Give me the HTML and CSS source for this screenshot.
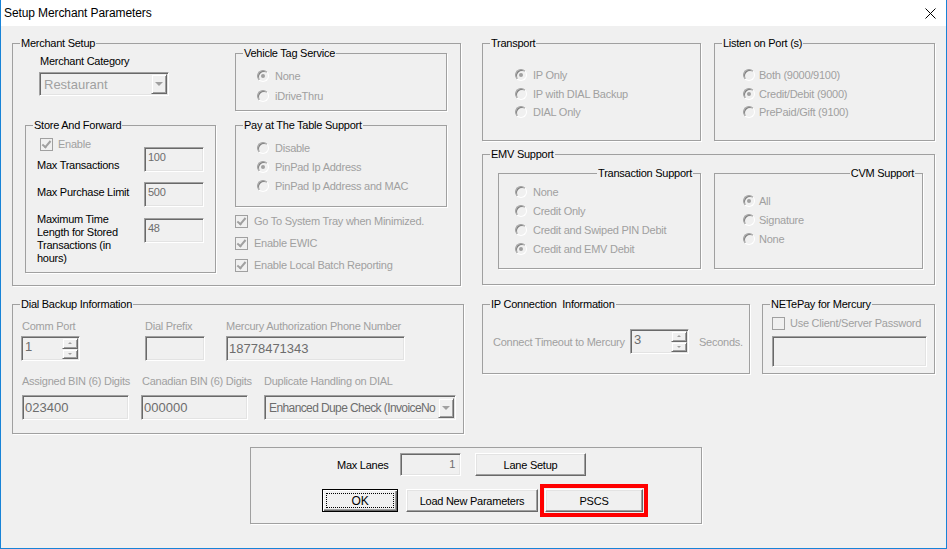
FILE: index.html
```html
<!DOCTYPE html>
<html lang="en">
<head>
    <meta charset="UTF-8">
    <title>Setup Merchant Parameters</title>
    <link rel="stylesheet" href="styles.css">
</head>
<body>

<div class="window">
    <div class="titlebar">
        <span class="title">Setup Merchant Parameters</span>
        <svg class="close" width="11" height="11" viewBox="0 0 11 11">
            <path d="M0.5 0.5 L10.5 10.5 M10.5 0.5 L0.5 10.5" stroke="#000" stroke-width="1" fill="none"/>
        </svg>
    </div>

    <div class="client">
        <div class="columns">
            <div class="col-left">
                <fieldset class="group merchant">
                    <legend>Merchant Setup</legend>
                    <div class="merchant-body">
                        <div class="merchant-main">
                            <div class="cat-label">Merchant Category</div>
                            <div class="combo cat-combo">
                                <span class="combo-text light">Restaurant</span>
                                <span class="drop"><i class="tri-down"></i></span>
                            </div>

                            <fieldset class="group store">
                                <legend>Store And Forward</legend>
                                <div class="check enable"><span class="box on"></span>Enable</div>
                                <div class="frow r1">
                                    <span class="flabel">Max Transactions</span>
                                    <span class="edit small">100</span>
                                </div>
                                <div class="frow r2">
                                    <span class="flabel">Max Purchase Limit</span>
                                    <span class="edit small">500</span>
                                </div>
                                <div class="frow r3">
                                    <span class="flabel">Maximum Time Length for Stored Transactions (in hours)</span>
                                    <span class="edit small">48</span>
                                </div>
                            </fieldset>
                        </div>

                        <div class="merchant-side">
                            <fieldset class="group vehicle">
                                <legend>Vehicle Tag Service</legend>
                                <div class="opts">
                                    <div class="radio-row"><span class="radio on"></span>None</div>
                                    <div class="radio-row"><span class="radio"></span>iDriveThru</div>
                                </div>
                            </fieldset>

                            <fieldset class="group table">
                                <legend>Pay at The Table Support</legend>
                                <div class="opts">
                                    <div class="radio-row"><span class="radio"></span>Disable</div>
                                    <div class="radio-row"><span class="radio on"></span>PinPad Ip Address</div>
                                    <div class="radio-row"><span class="radio"></span>PinPad Ip Address and MAC</div>
                                </div>
                            </fieldset>

                            <div class="checks">
                                <div class="check"><span class="box on"></span>Go To System Tray when Minimized.</div>
                                <div class="check"><span class="box on"></span>Enable EWIC</div>
                                <div class="check"><span class="box on"></span>Enable Local Batch Reporting</div>
                            </div>
                        </div>
                    </div>
                </fieldset>

                <fieldset class="group dial">
                    <legend>Dial Backup Information</legend>
                    <div class="dial-row d1">
                        <div class="dcol c-comm">
                            <span class="dlabel">Comm Port</span>
                            <div class="spin">
                                <span class="spin-text">1</span>
                                <span class="spin-btns">
                                    <span class="sbtn"><i class="tri-up"></i></span>
                                    <span class="sbtn"><i class="tri-down small"></i></span>
                                </span>
                            </div>
                        </div>
                        <div class="dcol c-prefix">
                            <span class="dlabel">Dial Prefix</span>
                            <span class="edit big"></span>
                        </div>
                        <div class="dcol c-phone">
                            <span class="dlabel">Mercury Authorization Phone Number</span>
                            <span class="edit big">18778471343</span>
                        </div>
                    </div>
                    <div class="dial-row d2">
                        <div class="dcol c-bin">
                            <span class="dlabel">Assigned BIN (6) Digits</span>
                            <span class="edit big">023400</span>
                        </div>
                        <div class="dcol c-cbin">
                            <span class="dlabel">Canadian BIN (6) Digits</span>
                            <span class="edit big">000000</span>
                        </div>
                        <div class="dcol c-dupe">
                            <span class="dlabel">Duplicate Handling on DIAL</span>
                            <div class="combo dupe-combo">
                                <span class="combo-text">Enhanced Dupe Check (InvoiceNo</span>
                                <span class="drop"><i class="tri-down"></i></span>
                            </div>
                        </div>
                    </div>
                </fieldset>
            </div>

            <div class="col-right">
                <div class="top-row">
                    <fieldset class="group transport">
                        <legend>Transport</legend>
                        <div class="opts">
                            <div class="radio-row"><span class="radio on"></span>IP Only</div>
                            <div class="radio-row"><span class="radio"></span>IP with DIAL Backup</div>
                            <div class="radio-row"><span class="radio"></span>DIAL Only</div>
                        </div>
                    </fieldset>
                    <fieldset class="group listen">
                        <legend>Listen on Port (s)</legend>
                        <div class="opts">
                            <div class="radio-row"><span class="radio"></span>Both (9000/9100)</div>
                            <div class="radio-row"><span class="radio on"></span>Credit/Debit (9000)</div>
                            <div class="radio-row"><span class="radio"></span>PrePaid/Gift (9100)</div>
                        </div>
                    </fieldset>
                </div>

                <fieldset class="group emv">
                    <legend>EMV Support</legend>
                    <div class="emv-row">
                        <fieldset class="group trans">
                            <legend class="right">Transaction Support</legend>
                            <div class="opts">
                                <div class="radio-row"><span class="radio"></span>None</div>
                                <div class="radio-row"><span class="radio"></span>Credit Only</div>
                                <div class="radio-row"><span class="radio"></span>Credit and Swiped PIN Debit</div>
                                <div class="radio-row"><span class="radio on"></span>Credit and EMV Debit</div>
                            </div>
                        </fieldset>
                        <fieldset class="group cvm">
                            <legend class="right">CVM Support</legend>
                            <div class="opts">
                                <div class="radio-row"><span class="radio on"></span>All</div>
                                <div class="radio-row"><span class="radio"></span>Signature</div>
                                <div class="radio-row"><span class="radio"></span>None</div>
                            </div>
                        </fieldset>
                    </div>
                </fieldset>

                <div class="bottom-row">
                    <fieldset class="group ipconn">
                        <legend>IP Connection&nbsp; Information</legend>
                        <div class="timeout">
                            <span class="t-label">Connect Timeout to Mercury</span>
                            <div class="spin t-spin">
                                <span class="spin-text">3</span>
                                <span class="spin-btns">
                                    <span class="sbtn"><i class="tri-up"></i></span>
                                    <span class="sbtn"><i class="tri-down small"></i></span>
                                </span>
                            </div>
                            <span class="t-sec">Seconds.</span>
                        </div>
                    </fieldset>
                    <fieldset class="group netepay">
                        <legend>NETePay for Mercury</legend>
                        <div class="check pw"><span class="box"></span>Use Client/Server Password</div>
                        <span class="edit pw-field"></span>
                    </fieldset>
                </div>
            </div>
        </div>

        <div class="lanes">
            <div class="lanes-row1">
                <span class="lanes-label">Max Lanes</span>
                <span class="edit lanes-field">1</span>
                <button class="btn lane-btn">Lane Setup</button>
            </div>
            <div class="lanes-row2">
                <button class="btn default ok-btn"><span class="focus">OK</span></button>
                <button class="btn load-btn">Load New Parameters</button>
                <button class="btn pscs-btn">PSCS</button>
            </div>
        </div>
    </div>
</div>

</body>
</html>
```

FILE: styles.css
```css
* {
    box-sizing: border-box;
}
body {
    margin: 0;
    font-family: "Liberation Sans", Arial, sans-serif;
    font-size: 11px;
    letter-spacing: -0.25px;
    color: #000;
    background: #f0f0f0;
}
.window {
    width: 947px;
    height: 549px;
    border: 1px solid #1883d7;
    border-top: none;
    background: #f0f0f0;
    display: flex;
    flex-direction: column;
}
.titlebar {
    height: 26px;
    flex: none;
    background: #fff;
    display: flex;
    align-items: center;
    justify-content: space-between;
    padding: 0 10px 0 3px;
}
.title {
    font-size: 12px;
    letter-spacing: -0.1px;
}
.client {
    flex: 1;
    padding: 10px 0 0 11px;
}
.columns {
    display: flex;
    gap: 18px;
}
.col-left {
    width: 452px;
}
.col-right {
    width: 453px;
}

/* group boxes */
.group {
    margin: 0;
    padding: 0;
    min-width: 0;
    border: 1px solid #a0a0a0;
    box-shadow: 1px 1px 0 #fff;
}
.group > legend {
    padding: 0 1px;
    margin-left: 7px;
    line-height: 14px;
    height: 14px;
}
.group > legend.right {
    margin-left: auto;
    margin-right: 7px;
}

/* controls */
.edit {
    display: block;
    border: 1px solid;
    border-color: #a0a0a0 #fff #fff #a0a0a0;
    box-shadow: inset 1px 1px 0 #696969, inset -1px -1px 0 #e3e3e3;
    background: #f0f0f0;
    color: #6d6d6d;
    padding: 2px 3px;
    line-height: 14px;
    white-space: nowrap;
    overflow: hidden;
}
.edit.small {
    width: 60px;
    height: 25px;
    flex: none;
}
.edit.big {
    height: 25px;
    font-size: 13px;
    letter-spacing: 0;
    padding: 4px 2px;
    line-height: 16px;
}
.combo {
    display: flex;
    align-items: center;
    border: 1px solid;
    border-color: #a0a0a0 #fff #fff #a0a0a0;
    box-shadow: inset 1px 1px 0 #696969, inset -1px -1px 0 #e3e3e3;
    background: #f0f0f0;
    padding: 1px 1px 1px 2px;
    color: #6d6d6d;
    font-size: 13px;
    letter-spacing: 0;
}
.combo-text {
    flex: 1;
    white-space: nowrap;
    overflow: hidden;
    padding-left: 2px;
}
.combo-text.light {
    color: #a0a0a0;
}
.drop {
    width: 16px;
    height: 20px;
    flex: none;
    display: flex;
    align-items: center;
    justify-content: center;
    border: 1px solid;
    border-color: #f0f0f0 #696969 #696969 #f0f0f0;
    box-shadow: inset 1px 1px 0 #fff, inset -1px -1px 0 #a0a0a0;
}
.tri-down {
    width: 0;
    height: 0;
    border-left: 4px solid transparent;
    border-right: 4px solid transparent;
    border-top: 4px solid #a0a0a0;
}
.tri-down.small,
.tri-up {
    border-left-width: 2px;
    border-right-width: 2px;
    border-top-width: 2px;
}
.tri-up {
    width: 0;
    height: 0;
    border-left: 2px solid transparent;
    border-right: 2px solid transparent;
    border-bottom: 2px solid #a0a0a0;
}
.spin {
    display: flex;
    height: 25px;
    border: 1px solid;
    border-color: #a0a0a0 #fff #fff #a0a0a0;
    box-shadow: inset 1px 1px 0 #696969, inset -1px -1px 0 #e3e3e3;
    padding: 1px 1px 1px 2px;
    color: #6d6d6d;
    font-size: 13px;
    letter-spacing: 0;
}
.spin-text {
    flex: 1;
    line-height: 18px;
    padding-left: 1px;
}
.spin-btns {
    width: 16px;
    display: flex;
    flex-direction: column;
}
.sbtn {
    flex: 1;
    display: flex;
    align-items: center;
    justify-content: center;
    border: 1px solid;
    border-color: #f0f0f0 #696969 #696969 #f0f0f0;
    box-shadow: inset 1px 1px 0 #fff, inset -1px -1px 0 #a0a0a0;
}
.radio-row {
    display: flex;
    align-items: center;
    gap: 6px;
    height: 14px;
    color: #a0a0a0;
    white-space: nowrap;
}
.radio {
    width: 12px;
    height: 12px;
    flex: none;
    border-radius: 50%;
    border: 1px solid;
    border-color: #a0a0a0 #fff #fff #a0a0a0;
    box-shadow: inset 1px 1px 0 #808080;
    background: #f0f0f0;
    display: flex;
    align-items: center;
    justify-content: center;
}
.radio.on::after {
    content: "";
    width: 4px;
    height: 4px;
    border-radius: 50%;
    background: #a0a0a0;
}
.check {
    display: flex;
    align-items: center;
    gap: 6px;
    height: 14px;
    color: #a0a0a0;
    white-space: nowrap;
}
.box {
    width: 13px;
    height: 13px;
    flex: none;
    border: 1px solid #a0a0a0;
    background: #f0f0f0;
    display: flex;
    align-items: center;
    justify-content: center;
}
.box.on::after {
    content: "";
    width: 3px;
    height: 7px;
    margin-top: -2px;
    border: solid #a0a0a0;
    border-width: 0 2px 2px 0;
    transform: rotate(40deg);
}

/* merchant setup */
.merchant {
    width: 449px;
    height: 250px;
}
.merchant-body {
    display: flex;
    margin-top: -4px;
    padding-left: 12px;
}
.merchant-main {
    width: 191px;
}
.cat-label {
    margin: 8px 0 0 15px;
    line-height: 14px;
}
.cat-combo {
    margin: 4px 0 0 14px;
    width: 130px;
    height: 24px;
}
.store {
    margin-top: 22px;
    width: 191px;
    height: 155px;
}
.enable {
    margin: 5px 0 0 14px;
    gap: 5px;
}
.frow {
    display: flex;
    margin-left: 11px;
}
.flabel {
    width: 107px;
    line-height: 14px;
}
.r1 {
    margin-top: -4px;
}
.r1 .flabel {
    margin-top: 11px;
}
.r2 {
    margin-top: 10px;
}
.r2 .flabel {
    margin-top: 3px;
}
.r3 {
    margin-top: 11px;
}
.r3 .flabel {
    margin-top: -5px;
    line-height: 13px;
    padding-right: 10px;
}
.merchant-side {
    margin-left: 19px;
    width: 212px;
}
.opts {
    display: flex;
    flex-direction: column;
}
.vehicle {
    height: 65px;
}
.vehicle .opts {
    padding: 9px 0 0 21px;
    gap: 6px;
}
.table {
    margin-top: 7px;
    height: 89px;
}
.table .opts {
    padding: 9px 0 0 21px;
    gap: 5px;
}
.checks {
    margin-top: 7px;
    display: flex;
    flex-direction: column;
    gap: 8px;
}

/* dial backup */
.dial {
    margin-top: 11px;
    width: 452px;
    height: 137px;
}
.dial-row {
    display: flex;
}
.dcol {
    display: flex;
    flex-direction: column;
    flex: none;
}
.dlabel {
    color: #a0a0a0;
    line-height: 14px;
    white-space: nowrap;
}
.d1 {
    margin-top: 8px;
    padding-left: 8px;
}
.d1 .dlabel {
    margin-bottom: 3px;
}
.c-comm {
    width: 59px;
}
.c-comm .dlabel {
    margin-left: 1px;
}
.c-prefix {
    width: 60px;
    margin-left: 65px;
}
.c-phone {
    width: 179px;
    margin-left: 21px;
}
.d2 {
    margin-top: 13px;
    padding-left: 9px;
}
.d2 .dlabel {
    margin-bottom: 7px;
}
.c-bin {
    width: 107px;
}
.c-cbin {
    width: 107px;
    margin-left: 12px;
}
.c-cbin .dlabel {
    margin-left: 1px;
}
.c-dupe {
    width: 192px;
    margin-left: 16px;
}
.dupe-combo {
    height: 25px;
    font-size: 12px;
    letter-spacing: -0.6px;
}

/* right column */
.top-row {
    display: flex;
    gap: 13px;
}
.transport {
    width: 219px;
    height: 105px;
}
.listen {
    width: 221px;
    height: 105px;
}
.transport .opts {
    padding: 18px 0 0 32px;
    gap: 4.5px;
}
.listen .opts {
    padding: 18px 0 0 28px;
    gap: 4.5px;
}
.listen .radio-row,
.cvm .radio-row {
    gap: 4px;
}
.emv {
    margin-top: 6px;
    width: 453px;
    height: 138px;
}
.emv-row {
    display: flex;
    gap: 13px;
    margin: 5px 0 0 15px;
}
.trans {
    width: 203px;
    height: 103px;
}
.cvm {
    width: 209px;
    height: 103px;
}
.trans .opts {
    padding: 5px 0 0 16px;
    gap: 5px;
}
.cvm .opts {
    padding: 14px 0 0 28px;
    gap: 5px;
}
.bottom-row {
    display: flex;
    gap: 12px;
    margin-top: 12px;
}
.ipconn {
    width: 268px;
    height: 77px;
}
.netepay {
    width: 173px;
    height: 77px;
}
.timeout {
    display: flex;
    align-items: center;
    margin: 18px 0 0 10px;
    color: #a0a0a0;
}
.t-label {
    width: 137px;
    white-space: nowrap;
}
.t-spin {
    width: 59px;
}
.t-sec {
    margin-left: 10px;
}
.pw {
    margin: 5px 0 0 9px;
    gap: 5px;
}
.pw-field {
    margin: 6px 0 0 9px;
    width: 155px;
    height: 31px;
}

/* lanes and buttons */
.lanes {
    margin: 13px 0 0 238px;
    width: 452px;
    height: 77px;
    border: 1px solid #a0a0a0;
    box-shadow: 1px 1px 0 #fff;
}
.lanes-row1 {
    display: flex;
    align-items: center;
    margin: 5px 0 0 86px;
}
.lanes-label {
    width: 63px;
}
.lanes-field {
    width: 61px;
    height: 23px;
    text-align: right;
    padding: 2px 5px;
    line-height: 16px;
}
.lanes-row2 {
    display: flex;
    margin: 13px 0 0 71px;
}
.btn {
    height: 23px;
    margin: 0;
    padding: 0;
    font-family: "Liberation Sans", Arial, sans-serif;
    font-size: 11px;
    letter-spacing: -0.25px;
    color: #000;
    background: #f0f0f0;
    border: 1px solid;
    border-color: #fff #696969 #696969 #fff;
    box-shadow: inset -1px -1px 0 #a0a0a0, inset 1px 1px 0 #e3e3e3;
    display: flex;
    align-items: center;
    justify-content: center;
}
.lane-btn {
    width: 111px;
    margin-left: 14px;
}
.btn.default {
    border-color: #000;
    box-shadow: inset 1px 1px 0 #fff, inset -1px -1px 0 #696969, inset -2px -2px 0 #a0a0a0;
    padding: 3px;
}
.focus {
    flex: 1;
    align-self: stretch;
    display: flex;
    align-items: center;
    justify-content: center;
    border: 1px dotted #000;
    font-size: 12px;
}
.ok-btn {
    width: 76px;
}
.load-btn {
    width: 132px;
    margin-left: 8px;
}
.pscs-btn {
    width: 98px;
    margin-left: 7px;
    outline: 4px solid #f00;
    outline-offset: 1px;
}
```
